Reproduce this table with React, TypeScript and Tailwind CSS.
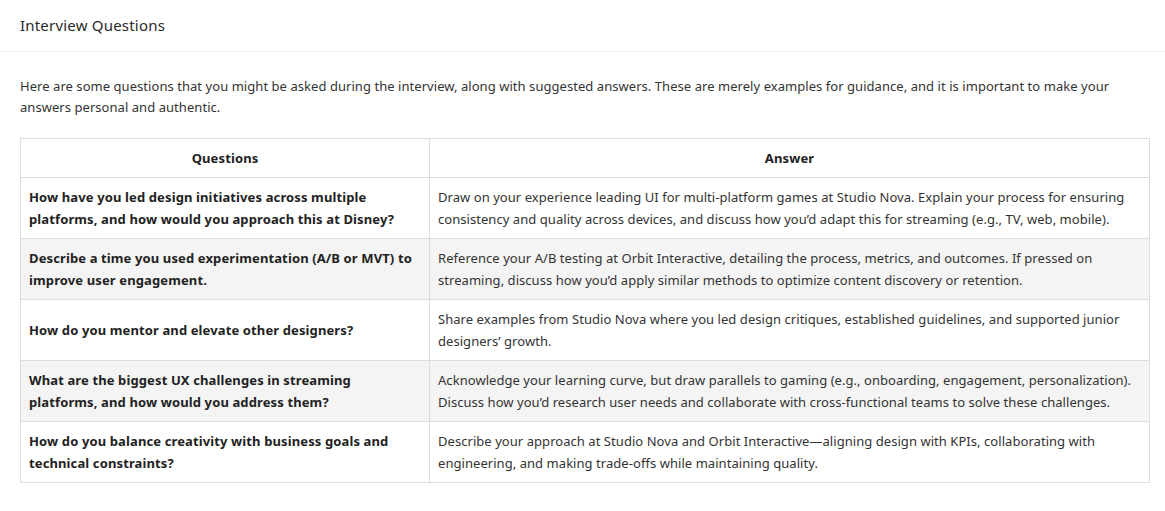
import React from "react";

const rows = [
  {
    q: "How have you led design initiatives across multiple platforms, and how would you approach this at Disney?",
    a: "Draw on your experience leading UI for multi-platform games at Studio Nova. Explain your process for ensuring consistency and quality across devices, and discuss how you’d adapt this for streaming (e.g., TV, web, mobile).",
  },
  {
    q: "Describe a time you used experimentation (A/B or MVT) to improve user engagement.",
    a: "Reference your A/B testing at Orbit Interactive, detailing the process, metrics, and outcomes. If pressed on streaming, discuss how you’d apply similar methods to optimize content discovery or retention.",
  },
  {
    q: "How do you mentor and elevate other designers?",
    a: "Share examples from Studio Nova where you led design critiques, established guidelines, and supported junior designers’ growth.",
  },
  {
    q: "What are the biggest UX challenges in streaming platforms, and how would you address them?",
    a: "Acknowledge your learning curve, but draw parallels to gaming (e.g., onboarding, engagement, personalization). Discuss how you’d research user needs and collaborate with cross-functional teams to solve these challenges.",
  },
  {
    q: "How do you balance creativity with business goals and technical constraints?",
    a: "Describe your approach at Studio Nova and Orbit Interactive—aligning design with KPIs, collaborating with engineering, and making trade-offs while maintaining quality.",
  },
];

export default function App() {
  return (
    <div
      className="w-[1165px] h-[511px] bg-white text-[#333] overflow-hidden tracking-[0.05px]"
      style={{ fontFamily: "'Noto Sans', sans-serif" }}
    >
      <div className="h-[52px] px-5 flex items-center border-b border-[#eeeeee]">
        <h1 className="text-[15px] text-[#2a2a2a] tracking-[0.2px]">Interview Questions</h1>
      </div>
      <div className="pl-5 pr-[15px] pt-[24px]">
        <p className="text-[13px] leading-[21px] mb-[20px]">
          Here are some questions that you might be asked during the interview, along with suggested answers. These are merely examples for guidance, and it is important to make your answers personal and authentic.
        </p>
        <table className="w-full border-collapse text-[13px] leading-[22px]">
          <thead>
            <tr>
              <th className="w-[409px] border border-[#dddddd] px-2 py-2 font-bold text-[#222] text-center tracking-[0.12px]">Questions</th>
              <th className="border border-[#dddddd] px-2 py-2 font-bold text-[#222] text-center tracking-[0.12px]">Answer</th>
            </tr>
          </thead>
          <tbody>
            {rows.map((r, i) => (
              <tr key={i} className={i % 2 === 1 ? "bg-[#f4f4f4]" : "bg-white"}>
                <td className="border border-[#dddddd] px-2 py-2 font-bold text-[#222] align-middle tracking-[0.12px]">{r.q}</td>
                <td className="border border-[#dddddd] px-2 py-2 align-middle">{r.a}</td>
              </tr>
            ))}
          </tbody>
        </table>
      </div>
    </div>
  );
}
